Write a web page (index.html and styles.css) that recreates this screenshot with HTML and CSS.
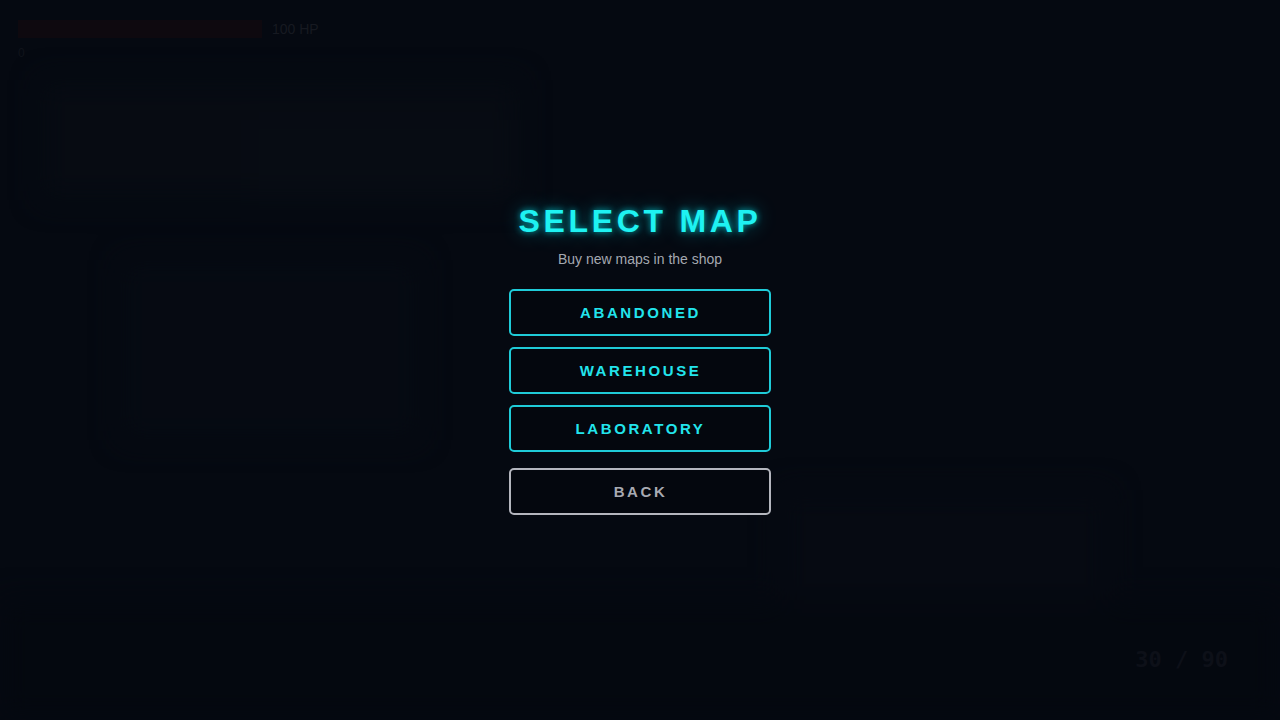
FILE: index.html
```html
<!DOCTYPE html>
<html lang="en">
	<head>
		<meta charset="UTF-8">
		<title>Select Map</title>
		<link rel="stylesheet" href="styles.css">
	</head>
	<body>
		<div class="scene">
			<div class="patch p1"></div>
			<div class="patch p2"></div>
			<div class="patch p3"></div>
			<div class="patch p4"></div>
			<div class="patch p5"></div>
		</div>
		<div class="hud">
			<div class="hpwrap">
				<div class="hpbar"><div class="hpfill"></div></div>
				<span class="hptext">100 HP</span>
			</div>
			<div class="score">0</div>
			<div class="ammo">30 / 90</div>
		</div>
		<div class="overlay">
			<div class="menu">
				<h1>SELECT MAP</h1>
				<p class="hint">Buy new maps in the shop</p>
				<div class="maplist">
					<button class="map">ABANDONED</button>
					<button class="map">WAREHOUSE</button>
					<button class="map">LABORATORY</button>
				</div>
				<button class="back">BACK</button>
			</div>
		</div>
	</body>
</html>
```

FILE: styles.css
```css
html, body {
	padding: 0px;
	margin: 0px;
	width: 100%;
	height: 100%;
	overflow: hidden;
	font-family: "Liberation Sans", Arial, Helvetica, sans-serif;
}
body {
	position: relative;
	background-color: #080d16;
}

/* blurred game scene behind the menu */
.scene {
	position: absolute;
	inset: 0;
	filter: blur(14px);
}
.patch {
	position: absolute;
}
.p1 { left: 40px; top: 80px; width: 480px; height: 120px; background-color: #0b1119; }
.p2 { left: 250px; top: 120px; width: 260px; height: 80px; background-color: #0c131b; }
.p3 { left: 120px; top: 260px; width: 300px; height: 180px; background-color: #0a1019; }
.p4 { left: 780px; top: 490px; width: 330px; height: 160px; background-color: #0a0f18; }
.p5 { left: 0px; top: 600px; width: 1280px; height: 120px; background-color: #070b13; }

.hud {
	position: absolute;
	inset: 0;
	padding: 20px 18px;
	color: #2a2e36;
}
.hpwrap {
	display: flex;
	align-items: center;
	gap: 10px;
}
.hpbar {
	width: 244px;
	height: 18px;
	background-color: #140d12;
	border-radius: 2px;
}
.hpfill {
	width: 100%;
	height: 100%;
	background-color: #190e13;
}
.hptext {
	font-size: 14px;
	color: #272b33;
}
.score {
	margin-top: 8px;
	font-size: 12px;
	color: #1c2028;
}
.ammo {
	position: absolute;
	right: 52px;
	bottom: 48px;
	font-family: "DejaVu Sans Mono", monospace;
	font-size: 22px;
	font-weight: bold;
	color: #161a24;
	white-space: pre;
}

/* menu overlay */
.overlay {
	position: absolute;
	inset: 0;
	display: flex;
	justify-content: center;
	background-color: rgba(3, 5, 12, 0.45);
}
.menu {
	display: flex;
	flex-direction: column;
	align-items: center;
	padding-top: 203px;
	width: 262px;
}
.menu > h1 {
	margin: 0px;
	font-size: 32px;
	line-height: 36px;
	font-weight: bold;
	letter-spacing: 3.7px;
	color: #1ef2f2;
	text-shadow: 0 0 6px rgba(0, 230, 240, 0.7), 0 0 20px rgba(0, 220, 235, 0.45);
}
.menu > .hint {
	margin: 12px 0px 0px 0px;
	font-size: 14px;
	line-height: 16px;
	color: #a4a8b0;
}
.maplist {
	display: flex;
	flex-direction: column;
	gap: 11px;
	width: 100%;
	margin-top: 22px;
}
button {
	box-sizing: border-box;
	width: 100%;
	height: 47px;
	background-color: #04070e;
	border: 2px solid #1fcbd8;
	border-radius: 5px;
	color: #22e4ec;
	font-family: "Liberation Sans", Arial, Helvetica, sans-serif;
	font-size: 15px;
	font-weight: bold;
	letter-spacing: 2.6px;
	text-indent: 1px;
	cursor: pointer;
}
button.back {
	margin-top: 16px;
	border-color: #b4b6be;
	color: #a8aab2;
}
```
